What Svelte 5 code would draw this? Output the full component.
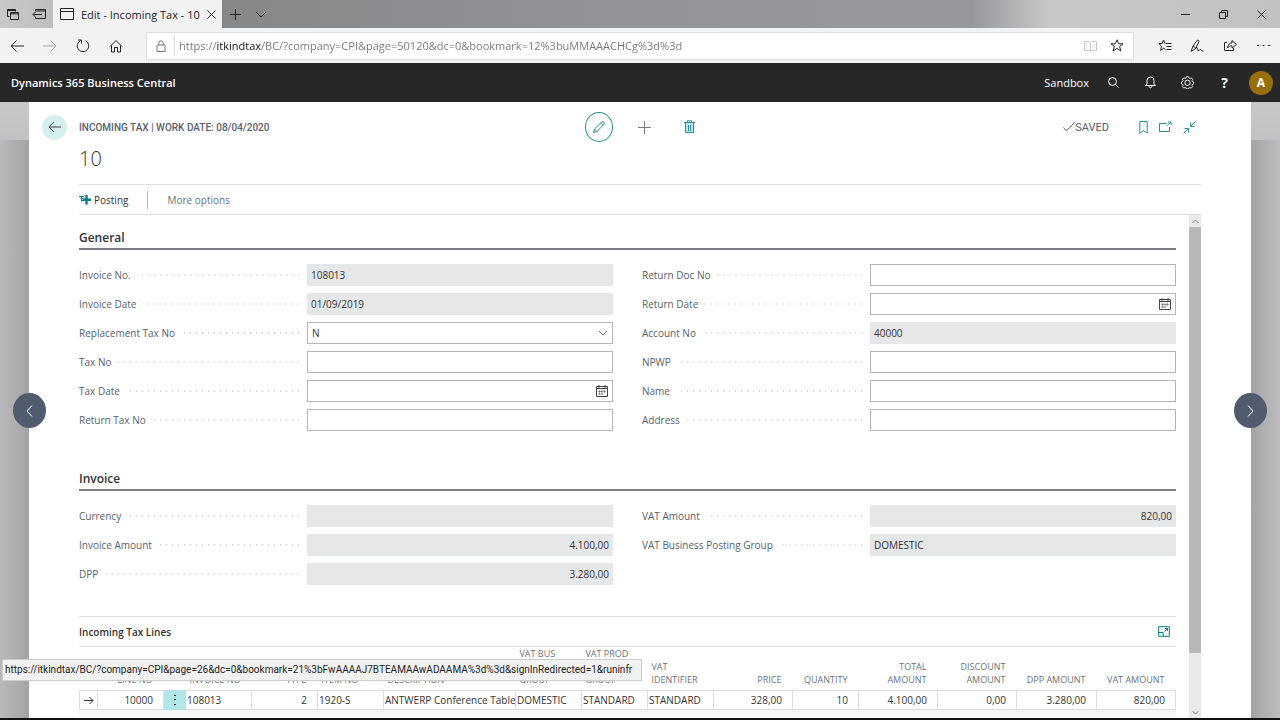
<script lang="ts">
	type Field = {
		id: string;
		label: string;
		value?: string;
		kind?: 'text' | 'select' | 'date';
		readonly?: boolean;
		right?: boolean;
	};

	let url = $state('https://itkindtax/BC/?company=CPI&page=50120&dc=0&bookmark=12%3buMMAAACHCg%3d%3d');

	const general: Field[][] = [
		[
			{ id: 'invoice-no', label: 'Invoice No.', value: '108013', readonly: true },
			{ id: 'invoice-date', label: 'Invoice Date', value: '01/09/2019', readonly: true },
			{ id: 'replacement', label: 'Replacement Tax No', value: 'N', kind: 'select' },
			{ id: 'tax-no', label: 'Tax No' },
			{ id: 'tax-date', label: 'Tax Date', kind: 'date' },
			{ id: 'return-tax-no', label: 'Return Tax No' }
		],
		[
			{ id: 'return-doc-no', label: 'Return Doc No' },
			{ id: 'return-date', label: 'Return Date', kind: 'date' },
			{ id: 'account-no', label: 'Account No', value: '40000', readonly: true },
			{ id: 'npwp', label: 'NPWP' },
			{ id: 'name', label: 'Name' },
			{ id: 'address', label: 'Address' }
		]
	];

	const invoice: Field[][] = [
		[
			{ id: 'currency', label: 'Currency', readonly: true },
			{ id: 'invoice-amount', label: 'Invoice Amount', value: '4.100,00', readonly: true, right: true },
			{ id: 'dpp', label: 'DPP', value: '3.280,00', readonly: true, right: true }
		],
		[
			{ id: 'vat-amount', label: 'VAT Amount', value: '820,00', readonly: true, right: true },
			{ id: 'vat-group', label: 'VAT Business Posting Group', value: 'DOMESTIC', readonly: true }
		]
	];

	const columns = [
		{ label: '', value: 'arrow', width: 18 },
		{ label: 'LINE NO', value: '10000', width: 66, right: true },
		{ label: '', value: 'menu', width: 22 },
		{ label: 'INVOICE NO', value: '108013', width: 66 },
		{ label: 'TYPE', value: '2', width: 66, right: true },
		{ label: 'ITEM NO', value: '1920-S', width: 66 },
		{ label: 'DESCRIPTION', value: 'ANTWERP Conference Table', width: 132 },
		{ label: 'VAT BUS POSTING GROUP', value: 'DOMESTIC', width: 66 },
		{ label: 'VAT PROD POSTING GROUP', value: 'STANDARD', width: 66 },
		{ label: 'VAT IDENTIFIER', value: 'STANDARD', width: 66 },
		{ label: 'PRICE', value: '328,00', width: 79, right: true },
		{ label: 'QUANTITY', value: '10', width: 66, right: true },
		{ label: 'TOTAL AMOUNT', value: '4.100,00', width: 79, right: true },
		{ label: 'DISCOUNT AMOUNT', value: '0,00', width: 79, right: true },
		{ label: 'DPP AMOUNT', value: '3.280,00', width: 80, right: true },
		{ label: 'VAT AMOUNT', value: '820,00', width: 79, right: true }
	];
	const totalWidth = columns.reduce((sum, c) => sum + c.width, 0);
</script>

{#snippet fieldColumn(fields: Field[])}
	<div class="field-column">
		{#each fields as f}
			<div class="field">
				<div class="caption">
					<label for={f.id}>{f.label}</label>
					<svg class="dots" height="2" aria-hidden="true"><line x1="100%" y1="1" x2="0" y2="1" stroke="#d3d6da" stroke-width="2" stroke-dasharray="1 5" /></svg>
				</div>
				<div class="box" class:readonly={f.readonly}>
					{#if f.kind === 'select'}
						<select id={f.id}><option>{f.value}</option><option>Y</option></select>
						<svg class="chevron" width="10" height="6" viewBox="0 0 10 6"><path d="M1 1l4 4 4-4" /></svg>
					{:else}
						<input id={f.id} type="text" value={f.value ?? ''} readonly={f.readonly} class:right={f.right} />
						{#if f.kind === 'date'}
							<button class="calendar" aria-label="Choose a date for {f.label}">
								<svg width="12" height="12" viewBox="0 0 12 12"><path d="M.5 1.500h11v10H.5zM.5 3.500h11M3 0v3M9 0v3" /><path d="M3.500 5v5M6 5v5M8.500 5v3M2 6.500h8M2 9h5" opacity=".5" /></svg>
							</button>
						{/if}
					{/if}
				</div>
			</div>
		{/each}
	</div>
{/snippet}

<div class="screen">
	<div class="tab-strip">
		<div class="tab-tools">
			<button aria-label="Tabs you've set aside"><svg width="14" height="14" viewBox="0 0 14 14"><path d="M3.500 9.500h-2v-7h8v2M1.500 3.500h8M4.500 5.500h8v7h-8zM4.500 6.800h8" /></svg></button>
			<button aria-label="Set tabs aside"><svg width="15" height="14" viewBox="0 0 15 14"><path d="M3.500 4.500v-2h10v9h-10v-1.500M4 4h9M1 7.500h9M3.500 5l-2.500 2.500 2.500 2.500" /></svg></button>
		</div>
		<div class="tab">
			<svg width="14" height="12" viewBox="0 0 14 12"><path d="M.5.5h13v11H.5zM.5 3.500h13" /></svg>
			<span>Edit - Incoming Tax - 10</span>
			<button aria-label="Close tab"><svg width="9" height="9" viewBox="0 0 9 9"><path d="M.5.5l8 8M8.500.5l-8 8" /></svg></button>
		</div>
		<button class="strip-button" aria-label="New tab"><svg width="11" height="11" viewBox="0 0 11 11"><path d="M5.500 0v11M0 5.500h11" /></svg></button>
		<button class="strip-button" aria-label="Show tab previews"><svg width="12" height="7" viewBox="0 0 12 7"><path d="M1 1l5 5 5-5" /></svg></button>
		<div class="window-buttons">
			<button aria-label="Minimize"><svg width="9" height="9" viewBox="0 0 9 9"><path d="M0 4.500h9" /></svg></button>
			<button aria-label="Restore"><svg width="9" height="9" viewBox="0 0 9 9"><path d="M.5 2.500h6v6h-6zM2.500 2.500v-2h6v6h-2" /></svg></button>
			<button aria-label="Close"><svg width="9" height="9" viewBox="0 0 9 9"><path d="M.5.5l8 8M8.500.5l-8 8" /></svg></button>
		</div>
	</div>

	<div class="nav-bar">
		<button class="nav" aria-label="Back"><svg width="14" height="12" viewBox="0 0 14 12"><path d="M14 6H1M6.500.5L1 6l5.500 5.500" /></svg></button>
		<button class="nav faded" aria-label="Forward"><svg width="14" height="12" viewBox="0 0 14 12"><path d="M0 6h13M7.500.5L13 6l-5.500 5.500" /></svg></button>
		<button class="nav" aria-label="Refresh"><svg width="14" height="14" viewBox="0 0 14 14"><path d="M9.500 1.600a5.800 5.800 0 1 1-5 0M2 1h3.500v3.500" /></svg></button>
		<button class="nav" aria-label="Home"><svg width="14" height="14" viewBox="0 0 14 14"><path d="M1 7.500L7 1.500l6 6M2.500 6.500v6.500h3V8.500h3V13h3V6.500" /></svg></button>
		<div class="address">
			<svg class="lock" width="10" height="12" viewBox="0 0 10 12"><path d="M1 5h8v6.500H1zM2.800 5V3a2.200 2.200 0 0 1 4.400 0v2" /></svg>
			<input type="text" aria-label="Address bar" bind:value={url} />
			<button class="book" aria-label="Reading view"><svg width="13" height="12" viewBox="0 0 13 12"><path d="M.5 1.500h5l1 1 1-1h5v9h-5l-1 1-1-1h-5zM6.500 2.500v9" /><path d="M2.500 3v6M10.500 3v6" opacity=".5" /></svg></button>
			<button aria-label="Add to favorites"><svg width="14" height="13" viewBox="0 0 14 13"><path d="M7 .8l1.700 4h4.300l-3.400 2.700 1.300 4.500L7 9.500 3.100 12l1.300-4.500L1 4.800h4.300z" /></svg></button>
		</div>
		<div class="browser-actions">
			<button aria-label="Favorites"><svg width="14" height="13" viewBox="0 0 14 13"><path d="M8 4.500h5.500M8.500 7.500h5M8.500 10.500h5M7.500 4.500H7L5.500 1 4.200 4.500H.8l2.800 2.700-1 4.300 3-2.300 1.900 1.500" /></svg></button>
			<button aria-label="Add notes"><svg width="15" height="14" viewBox="0 0 15 14"><path d="M1 12.500l2-5.500 4-5.500c1-.8 2.500 0 1.800 1.500L5.500 9.500l-4 3M3 7l2.500 2M5 10l1.500-1.500c1.500-.5 0 2.500 1.500 3s2-1.500 3-1 .5 2 2.500 1.500" /></svg></button>
			<button aria-label="Share"><svg width="15" height="13" viewBox="0 0 15 13"><path d="M4 3.500H1.500v8h9V9M4.500 9c.5-3.500 2-5 4.500-5V1.500L13.500 5.500 9 9V6.800C7 6.800 5.500 7.500 4.500 9z" /></svg></button>
			<button aria-label="Settings and more"><svg width="13" height="3" viewBox="0 0 13 3"><path class="solid" d="M0 1h2v1H0zM5.500 1h2v1h-2zM11 1h2v1h-2z" /></svg></button>
		</div>
	</div>

	<header class="app-bar">
		<a href="#home">Dynamics 365 Business Central</a>
		<div class="app-tools">
			<span class="environment">Sandbox</span>
			<button aria-label="Search"><svg width="11" height="11" viewBox="0 0 11 11"><circle cx="4.500" cy="4.500" r="3.900" /><path d="M7.500 7.500l3 3" /></svg></button>
			<button aria-label="Notifications"><svg width="11" height="13" viewBox="0 0 11 13"><path d="M.5 9.500h10L9 8V4.500a3.500 3.500 0 0 0-7 0V8zM4 10c0 2.500 3 2.500 3 0" /></svg></button>
			<button aria-label="Settings"><svg width="13" height="13" viewBox="0 0 13 13"><path d="M5.500.7h2l.4 1.300 1.200.5 1.200-.6 1.400 1.400-.6 1.200.4 1.100 1.200.4v1.900l-1.300.5-.4 1.100.6 1.200-1.400 1.400-1.300-.6-1 .4-.5 1.200H5.600l-.5-1.300-1.100-.4-1.200.6-1.400-1.400.6-1.200-.4-1.100L.5 7.800V5.900l1.200-.5.4-1-.6-1.200 1.400-1.400 1.200.6 1-.4z" opacity=".85" /><circle cx="6.500" cy="6.800" r="2.700" /></svg></button>
			<button class="help" aria-label="Help">?</button>
			<button class="avatar" aria-label="Account">A</button>
		</div>
	</header>

	<div class="backdrop">
		<button class="pager previous" aria-label="Previous record"><svg width="9" height="14" viewBox="0 0 9 14"><path d="M7 1.500L2 7l5 5.500" /></svg></button>
		<button class="pager next" aria-label="Next record"><svg width="9" height="14" viewBox="0 0 9 14"><path d="M2 1.500L7 7l-5 5.500" /></svg></button>

		<main class="page">
			<div class="page-head">
				<div class="crumb">
					<button class="back" aria-label="Go back"><svg width="13" height="12" viewBox="0 0 13 12"><path d="M13 6H1M6 1L1 6l5 5" /></svg></button>
					<span>INCOMING TAX | WORK DATE: 08/04/2020</span>
				</div>
				<div class="record-actions">
					<button class="edit" aria-label="Edit"><svg width="14" height="14" viewBox="0 0 14 14"><path d="M1.500 12.500l1-3.500L10 1.700c.9-.9 3.200 1.200 2.300 2.200L5 11.500zM9 2.800l2.300 2.300M2.500 9L5 11.500" /></svg></button>
					<button class="new" aria-label="New"><svg width="13" height="13" viewBox="0 0 13 13"><path d="M6.500 0v13M0 6.500h13" /></svg></button>
					<button class="delete" aria-label="Delete"><svg width="11" height="14" viewBox="0 0 11 14"><path class="fill" d="M1.500 3h8v10h-8z" /><path d="M0 2.500h11M3.500 2V.8h4V2M1.500 3v9.500h8V3M4.500 5v6M6.500 5v6" /></svg></button>
				</div>
				<div class="page-tools">
					<span class="saved"><svg width="12" height="10" viewBox="0 0 12 10"><path d="M.5 5.500l3 3.500 8-8.500" /></svg>SAVED</span>
					<button aria-label="Bookmark"><svg width="9" height="13" viewBox="0 0 9 13"><path d="M.8.5h7.400v11.800L4.500 9.500.8 12.300z" /></svg></button>
					<button aria-label="Open in new window"><svg width="13" height="12" viewBox="0 0 13 12"><path d="M7.500 2.500h-7v8h10V6M7.500 5l4-3.500M9 1h3v3" /></svg></button>
					<button aria-label="Make page narrower"><svg width="13" height="13" viewBox="0 0 13 13"><path d="M12.500.5L8 5M7.500 1.500v4h4M.5 12.500L5 8M1.500 7.500h4v4" /></svg></button>
				</div>
			</div>
			<h1>10</h1>

			<div class="action-bar">
				<button class="posting"><svg width="12" height="10" viewBox="0 0 12 10"><path d="M7.500 0v9.500M4 4.800h8" stroke-width="2.400" /><path d="M0 1.500h5M1.500 3.500h3M2 5.500h2M2.500 1.500v5" /></svg>Posting</button>
				<button class="more">More options</button>
			</div>

			<div class="scroller">
				<div class="content">
					<section>
						<h2>General</h2>
						<div class="fields">
							{#each general as fields}{@render fieldColumn(fields)}{/each}
						</div>
					</section>

					<section>
						<h2>Invoice</h2>
						<div class="fields">
							{#each invoice as fields}{@render fieldColumn(fields)}{/each}
						</div>
					</section>

					<section class="lines">
						<div class="lines-head">
							<h3>Incoming Tax Lines</h3>
							<button aria-label="Expand lines"><svg width="12" height="11" viewBox="0 0 12 11"><path d="M.7.7h10.600v9.600H.7zM.7 6.500h4.500v3.800M6.500 5.500l3-3M7 2.500h2.500V5" /></svg></button>
						</div>
						<table>
							<colgroup>
								{#each columns as c}<col style="width: {(c.width / totalWidth) * 100}%" />{/each}
							</colgroup>
							<thead>
								<tr>
									{#each columns as c}<th class:right={c.right}>{c.label}</th>{/each}
								</tr>
							</thead>
							<tbody>
								<tr>
									{#each columns as c}
										{#if c.value === 'arrow'}
											<td class="icon-cell"><svg width="10" height="9" viewBox="0 0 10 9"><path d="M0 4.500h9M5.500 1L9 4.500 5.500 8" /></svg></td>
										{:else if c.value === 'menu'}
											<td class="icon-cell menu"><button aria-label="Show more options"><svg width="2" height="12" viewBox="0 0 2 12"><path class="solid" d="M0 1h2v1H0zM0 5h2v1H0zM0 10h2v1H0z" /></svg></button></td>
										{:else}
											<td class:right={c.right}>{c.value}</td>
										{/if}
									{/each}
								</tr>
							</tbody>
						</table>
					</section>
				</div>

				<div class="scrollbar" aria-hidden="true">
					<svg width="7" height="5" viewBox="0 0 7 5"><path d="M.5 4l3-3 3 3" /></svg>
					<div class="track"><div class="thumb"></div></div>
					<svg width="7" height="5" viewBox="0 0 7 5"><path d="M.5 1l3 3 3-3" /></svg>
				</div>
			</div>
		</main>
	</div>

	<div class="status-tip">https://itkindtax/BC/?company=CPI&page=26&dc=0&bookmark=21%3bFwAAAAJ7BTEAMAAwADAAMA%3d%3d&signInRedirected=1&runinfr</div>
</div>

<style>
	:global(body) {
		margin: 0;
		background: #111;
	}

	.screen {
		position: relative;
		display: flex;
		flex-direction: column;
		height: 100vh;
		box-sizing: border-box;
		border-bottom: 2px solid #111;
		overflow: hidden;
		font-family: "Open Sans", "Noto Sans", sans-serif;
		font-size: 10px;
		color: #333;
	}

	button, input, select {
		font: inherit;
		color: inherit;
		background: none;
		border: 0;
		padding: 0;
		margin: 0;
	}

	button {
		display: flex;
		align-items: center;
		justify-content: center;
		cursor: pointer;
	}

	svg {
		display: block;
		flex: none;
		fill: none;
		stroke: currentColor;
	}

	.solid {
		fill: currentColor;
		stroke: none;
	}

	/* Browser chrome */
	.tab-strip {
		display: flex;
		align-items: stretch;
		flex: none;
		height: 28px;
		background: linear-gradient(90deg, #c8c8c8 0, #bebebe 52px, #858789 222px, #929497 50%, #96989c 76%, #c8c8c8 82%, #c2c2c2 100%);
		color: #222;
	}

	.tab-tools {
		display: flex;
		gap: 12px;
		padding: 0 6px;
		width: 41px;
	}

	.tab {
		display: flex;
		align-items: center;
		gap: 7px;
		box-sizing: border-box;
		width: 169px;
		padding: 0 10px 0 7px;
		background: #f2f2f2;
		font-size: 11px;
	}

	.tab span {
		flex: 1;
		white-space: nowrap;
	}

	.strip-button {
		width: 26px;
	}

	.window-buttons {
		display: flex;
		margin-left: auto;
	}

	.window-buttons button {
		width: 38px;
	}

	.nav-bar {
		display: flex;
		align-items: center;
		flex: none;
		height: 35px;
		background: #f2f2f2;
		color: #222;
	}

	.nav {
		width: 33px;
		height: 35px;
	}

	.faded {
		color: #aaa;
	}

	.address {
		display: flex;
		align-items: center;
		flex: 1;
		gap: 13px;
		height: 26px;
		margin-left: 14px;
		padding: 0 9px;
		background: #fff;
		border: 1px solid #ddd;
	}

	.lock {
		color: #777;
	}

	.address input {
		flex: 1;
		min-width: 0;
		height: 20px;
		padding-left: 4px;
		border-left: 1px solid #ddd;
		margin-left: -5px;
		font-size: 11px;
		color: #767676;
		background: linear-gradient(90deg, #767676 41px, #111 41px, #111 86px, #767676 86px);
		-webkit-background-clip: text;
		background-clip: text;
		-webkit-text-fill-color: transparent;
	}

	.book {
		color: #c6c6c6;
	}

	.browser-actions {
		display: flex;
		padding: 0 0 0 14px;
	}

	.browser-actions button {
		width: 33px;
		height: 35px;
	}

	/* Application header */
	.app-bar {
		display: flex;
		align-items: center;
		justify-content: space-between;
		flex: none;
		height: 39px;
		padding: 0 7px 0 11px;
		background: #272727;
		color: #fff;
	}

	.app-bar a {
		color: inherit;
		font-size: 11px;
		font-weight: 600;
		text-decoration: none;
	}

	.app-tools {
		display: flex;
		align-items: center;
	}

	.environment {
		margin-right: 6px;
		font-size: 11px;
	}

	.app-tools button {
		width: 37px;
		height: 37px;
	}

	.app-tools .help {
		font-size: 14px;
		font-weight: 700;
	}

	.app-tools .avatar {
		width: 24px;
		height: 24px;
		margin-left: 6px;
		border-radius: 50%;
		background: #986f0b;
		font-size: 12px;
		font-weight: 700;
	}

	/* Page */
	.backdrop {
		position: relative;
		display: flex;
		flex: 1;
		min-height: 0;
		padding: 0 29px;
		background:
			linear-gradient(#c9c9c9, #c1c1c1) 0 0 / 100% 38px no-repeat,
			linear-gradient(90deg, #b9b9bb 0, #a4a4a6 29px, #a4a4a6 calc(100% - 29px), #bdbdbf 100%);
	}

	.page {
		display: flex;
		flex-direction: column;
		flex: 1;
		min-width: 0;
		padding: 0 50px;
		background: #fff;
	}

	.pager {
		position: absolute;
		top: 291px;
		width: 33px;
		height: 35px;
		border-radius: 50%;
		background: #505c6d;
		color: #fff;
	}

	.previous {
		left: 13px;
	}

	.next {
		right: 13px;
	}

	.page-head {
		display: grid;
		grid-template-columns: 1fr auto 1fr;
		align-items: center;
		flex: none;
		height: 50px;
	}

	.crumb {
		display: flex;
		align-items: center;
		gap: 12px;
		margin-left: -37px;
		font-family: Roboto, sans-serif;
		font-weight: 500;
		color: #58616d;
	}

	.back {
		width: 25px;
		height: 25px;
		border-radius: 50%;
		background: #d5eff0;
		color: #444;
	}

	.record-actions {
		display: flex;
		align-items: center;
		gap: 17px;
		padding-left: 8px;
		color: #2b8e95;
	}

	.record-actions button {
		width: 28px;
		height: 30px;
	}

	.record-actions .edit {
		border: 1px solid #2b8e95;
		border-radius: 50%;
	}

	.record-actions .new {
		color: #777b82;
	}

	.fill {
		fill: #b2e6e9;
		stroke: none;
	}

	.page-tools {
		display: flex;
		align-items: center;
		justify-content: flex-end;
		gap: 11px;
		padding-right: 5px;
		color: #2b8e95;
	}

	.saved {
		display: flex;
		align-items: center;
		margin-right: 19px;
		font-family: Roboto, sans-serif;
		font-size: 11px;
		color: #58616d;
	}

	h1 {
		flex: none;
		height: 32px;
		margin: 0;
		font-family: "Open Sans", sans-serif;
		font-size: 20px;
		font-weight: 300;
		line-height: 14px;
		color: #333;
	}

	.action-bar {
		display: flex;
		align-items: center;
		flex: none;
		height: 29px;
		border-top: 1px solid #ddd;
		border-bottom: 1px solid #ddd;
	}

	.posting {
		gap: 3px;
		padding-right: 19px;
		height: 18px;
		border-right: 1px solid #bbb;
	}

	.posting svg {
		color: #008089;
	}

	.more {
		padding-left: 19px;
		color: #6a7380;
	}

	.scroller {
		display: flex;
		flex: 1;
		min-height: 0;
		gap: 13px;
	}

	.content {
		flex: 1;
		min-width: 0;
		overflow: hidden;
	}

	section {
		padding-bottom: 25px;
	}

	h2 {
		margin: 0;
		padding: 13px 0 1px;
		border-bottom: 2px solid #7a7c85;
		font-size: 12px;
		font-weight: 600;
		line-height: 19px;
	}

	.fields {
		display: grid;
		grid-template-columns: 1fr 1fr;
		gap: 29px;
		padding-top: 14px;
	}

	.field-column {
		display: flex;
		flex-direction: column;
		gap: 7px;
	}

	.field {
		display: grid;
		grid-template-columns: 228fr 306fr;
	}

	.caption {
		display: flex;
		align-items: center;
		gap: 6px;
		padding-right: 8px;
		color: #58616d;
	}

	.caption label {
		white-space: nowrap;
	}

	.dots {
		flex: 1;
		width: 0;
	}

	.box {
		display: flex;
		align-items: center;
		height: 22px;
		box-sizing: border-box;
		border: 1px solid #b3b5b8;
	}

	.box.readonly {
		background: #e6e7e8;
		border-color: #e6e7e8;
	}

	.box input, .box select {
		flex: 1;
		min-width: 0;
		height: 20px;
		padding: 0 3px;
	}

	.box select {
		appearance: none;
		padding-left: 4px;
	}

	.chevron {
		margin-right: 4px;
		color: #666;
	}

	.calendar {
		margin-right: 4px;
		color: #444;
	}

	input.right, .right {
		text-align: right;
	}

	.lines {
		margin-top: 6px;
		border-top: 1px solid #ddd;
		background: #f5f6f7;
	}

	.lines-head {
		display: flex;
		align-items: center;
		justify-content: space-between;
		height: 29px;
		padding-right: 6px;
		border-bottom: 1px solid #ddd;
		background: #fff;
		color: #008089;
	}

	h3 {
		margin: 0;
		font-size: 10px;
		font-weight: 600;
		color: #333;
	}

	table {
		width: 100%;
		table-layout: fixed;
		border-collapse: collapse;
		background: #fff;
	}

	th {
		height: 39px;
		padding: 0 4px;
		font-size: 9px;
		font-weight: 400;
		line-height: 13px;
		text-align: left;
		vertical-align: bottom;
		color: #6a7380;
	}

	th, th.right {
		padding-bottom: 4px;
	}

	th.right {
		padding-left: 0;
		padding-right: 11px;
		text-align: right;
	}

	td {
		height: 18px;
		padding: 0 10px 0 1px;
		border: 1px solid #ddd;
		line-height: 18px;
		white-space: nowrap;
	}

	td:not(.right) {
		padding-right: 0;
	}

	td.icon-cell {
		padding: 0;
	}

	.icon-cell svg {
		margin: 0 auto;
	}

	.menu {
		background: #b2e6e9;
		border-color: #b2e6e9;
	}

	.menu button {
		width: 100%;
		height: 18px;
	}

	.scrollbar {
		display: flex;
		flex-direction: column;
		align-items: center;
		width: 12px;
		background: #e9e9e9;
		color: #888;
	}

	.scrollbar svg {
		margin: 4px 0 3px;
	}

	.track {
		flex: 1;
		width: 100%;
	}

	.thumb {
		height: 89%;
		background: #b8b8b8;
	}

	.status-tip {
		position: absolute;
		left: 2px;
		bottom: 37px;
		box-sizing: border-box;
		min-width: 50%;
		padding: 0 2px;
		border: 1px solid #ccc;
		background: #f2f2f2;
		font-family: Roboto, sans-serif;
		line-height: 20px;
		color: #222;
		white-space: nowrap;
	}
</style>
